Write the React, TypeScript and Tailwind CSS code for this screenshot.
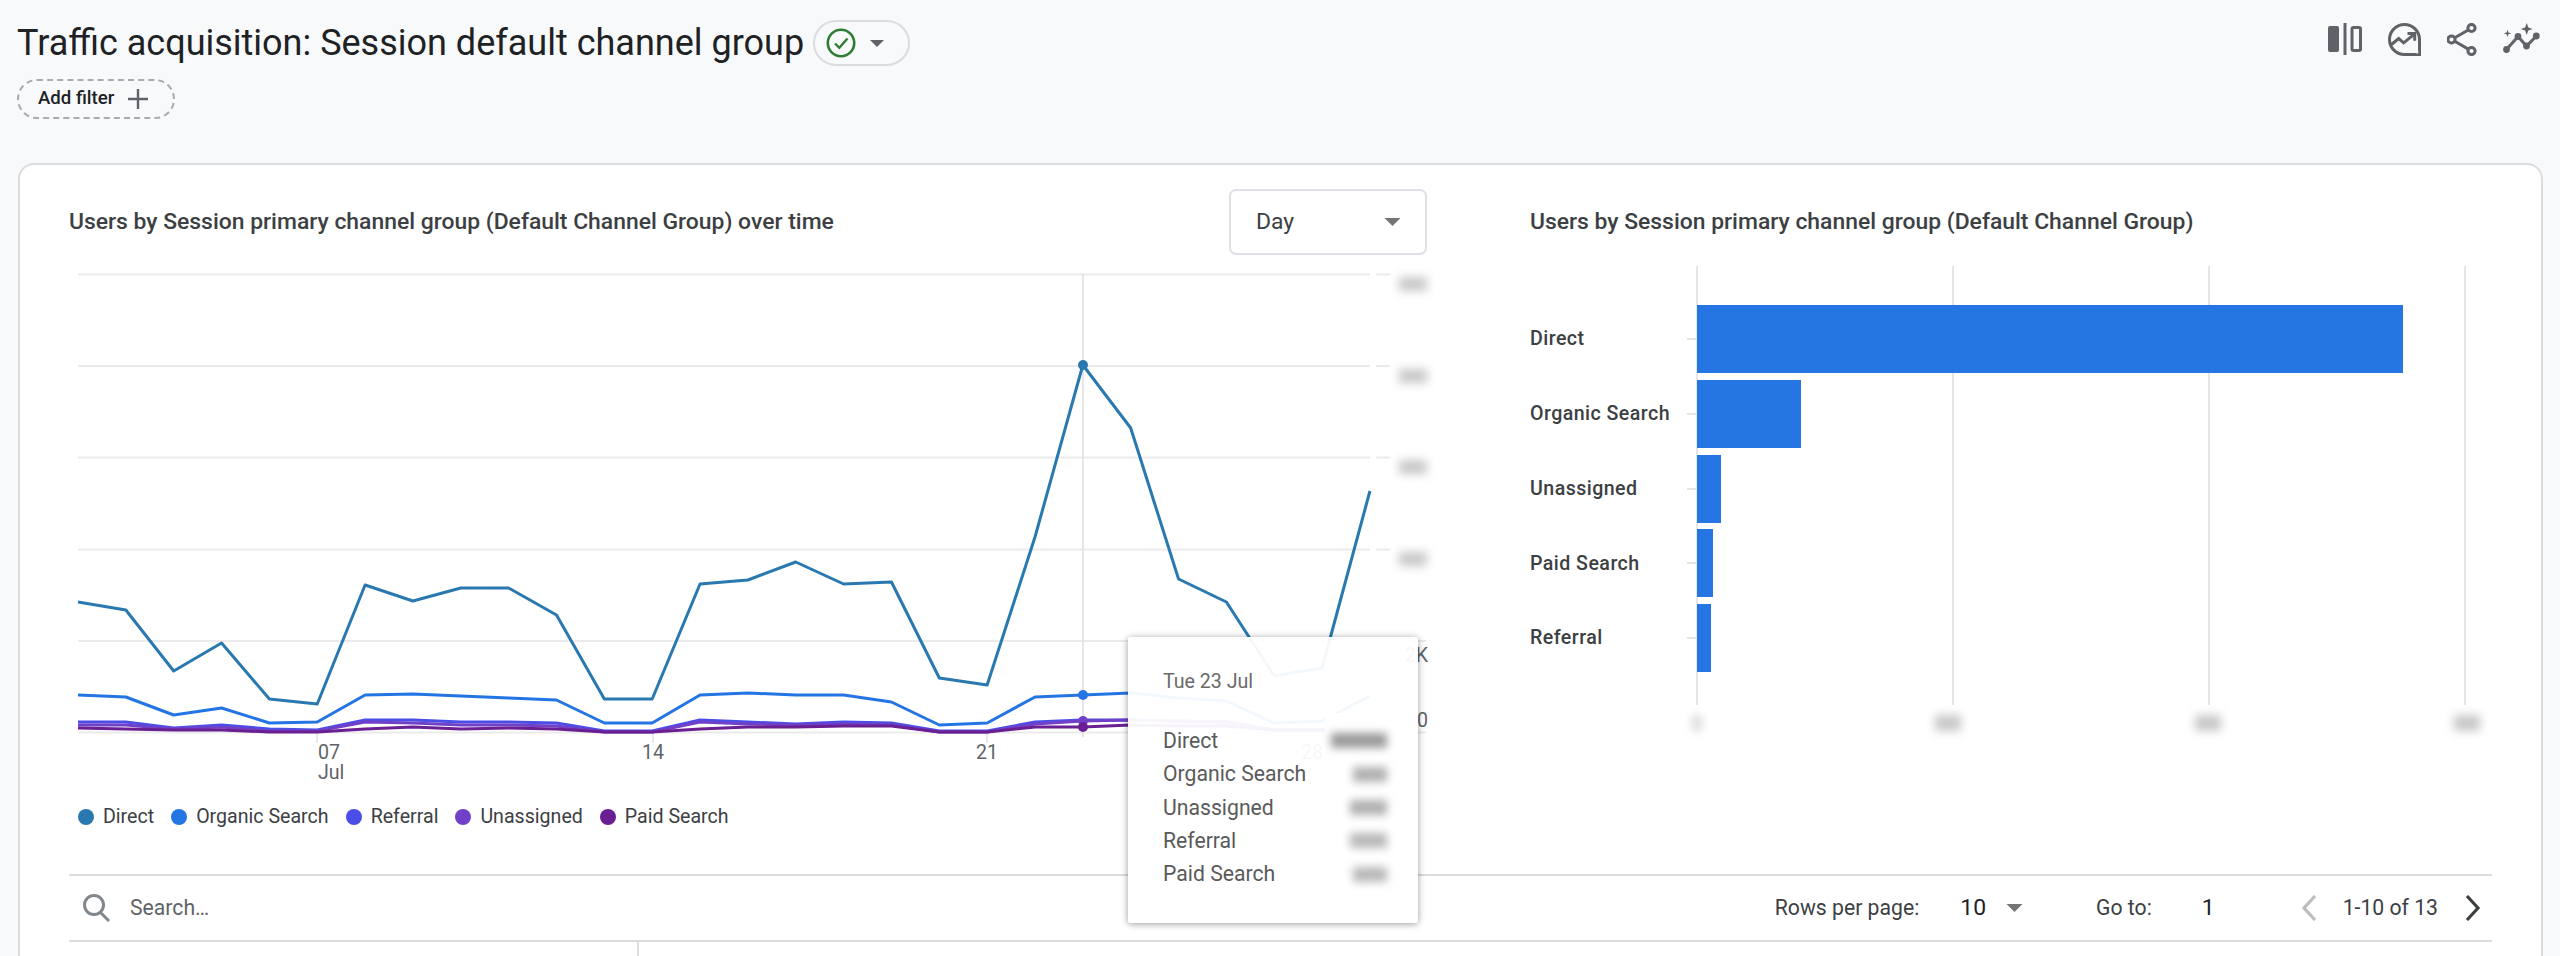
import React from 'react';

const xAt = (i: number) => 78 + i * 47.85;
const toPoints = (ys: number[]) => ys.map((y, i) => `${xAt(i)},${y}`).join(' ');

const series = [
  { name: 'Direct', stroke: '#2979b0', dot: 'bg-[#2979b0]', ys: [602, 610, 671, 643, 699, 704, 585, 601, 588, 588, 615, 699, 699, 584, 580, 562, 584, 582, 678, 685, 537, 365, 428, 579, 602, 676, 668, 491] },
  { name: 'Organic Search', stroke: '#2475e4', dot: 'bg-[#2475e4]', ys: [695, 697, 715, 708, 723, 722, 695, 694, 696, 698, 700, 723, 723, 695, 693, 695, 695, 702, 725, 723, 697, 695, 693, 698, 701, 723, 721, 696] },
  { name: 'Referral', stroke: '#4a4ee6', dot: 'bg-[#4a4ee6]', ys: [722, 722, 728, 725, 729, 730, 720, 720, 722, 722, 723, 731, 731, 720, 722, 724, 722, 723, 731, 731, 722, 720, 720, 721, 722, 730, 730, 727] },
  { name: 'Unassigned', stroke: '#7040c8', dot: 'bg-[#7040c8]', ys: [725, 725, 729, 727, 731, 731, 722, 723, 725, 725, 726, 732, 732, 722, 724, 725, 724, 725, 732, 732, 724, 721, 720, 721, 722, 730, 730, 727] },
  { name: 'Paid Search', stroke: '#6a1f93', dot: 'bg-[#6a1f93]', ys: [728, 729, 730, 730, 732, 732, 729, 727, 729, 728, 729, 732, 732, 729, 727, 727, 726, 726, 732, 732, 727, 727, 725, 726, 726, 730, 730, 728] },
];

const gridYs = [274.5, 366, 457.5, 549.5, 641, 732.5];

const tooltipRows = [
  { name: 'Direct', blob: 'w-[56px] bg-[#9a9a9a]' },
  { name: 'Organic Search', blob: 'w-[34px] bg-[#b0b0b0]' },
  { name: 'Unassigned', blob: 'w-[37px] bg-[#b0b0b0]' },
  { name: 'Referral', blob: 'w-[37px] bg-[#b8b8b8]' },
  { name: 'Paid Search', blob: 'w-[34px] bg-[#b8b8b8]' },
];

const bars = [
  { name: 'Direct', width: 'w-[706px]' },
  { name: 'Organic Search', width: 'w-[104px]' },
  { name: 'Unassigned', width: 'w-[24px]' },
  { name: 'Paid Search', width: 'w-[16px]' },
  { name: 'Referral', width: 'w-[14px]' },
];

function Caret({ className }: { className: string }) {
  return (
    <svg className={className} viewBox="0 0 16 8">
      <path d="M0 0h16L8 8z" fill="currentColor" />
    </svg>
  );
}

function HeaderIcons() {
  return (
    <div className="flex items-center gap-[26px] mr-[20px] mt-[2px] text-[#5f6368]">
      <svg className="w-[34px] h-[34px]" viewBox="0 0 34 34" fill="none" stroke="currentColor">
        <rect x="0" y="4" width="11" height="26" rx="2" fill="currentColor" stroke="none" />
        <path d="M17 1v32" strokeWidth="3" />
        <rect x="24" y="5.5" width="8.5" height="23" rx="1.5" strokeWidth="3" />
      </svg>
      <svg className="w-[33px] h-[33px]" viewBox="0 0 33 33" fill="none" stroke="currentColor">
        <path d="M16.5 1.5A15 15 0 0 1 31.5 16.5V31.5H16.5A15 15 0 1 1 16.5 1.5Z" strokeWidth="3" />
        <path d="M3.5 21.5l7.2-6 5 4.3 10-8.1" strokeWidth="3" />
        <path d="M19.5 10.5h7.2v7.2" strokeWidth="3" />
        <path d="M25 33h8v-8z" fill="currentColor" stroke="none" />
        <circle cx="29" cy="29" r="1.5" fill="#f8f9fb" stroke="none" />
      </svg>
      <svg className="w-[30px] h-[33px]" viewBox="0 0 30 33" fill="none" stroke="currentColor" strokeWidth="3">
        <circle cx="24.5" cy="5" r="3.6" />
        <circle cx="4.5" cy="16.5" r="3.6" />
        <circle cx="24.5" cy="28" r="3.6" />
        <path d="M7.7 14.7 21.3 7M7.7 18.3l13.6 7.8" />
      </svg>
      <svg className="w-[37px] h-[32px]" viewBox="0 0 37 32" fill="none" stroke="currentColor">
        <path d="M3.5 26.5 15 13.5l8.5 9.5 10-10" strokeWidth="3" />
        <circle cx="3.5" cy="26.5" r="3.4" fill="currentColor" stroke="none" />
        <circle cx="15" cy="13.5" r="3.4" fill="currentColor" stroke="none" />
        <circle cx="23.5" cy="23" r="3.4" fill="currentColor" stroke="none" />
        <circle cx="33.3" cy="13" r="3.4" fill="currentColor" stroke="none" />
        <path d="M23.7 0l1.6 4.4 4.4 1.6-4.4 1.6-1.6 4.4-1.6-4.4-4.4-1.6 4.4-1.6z" fill="currentColor" stroke="none" />
        <path d="M4.5 6.5l.9 2.9 2.9.9-2.9.9-.9 2.9-.9-2.9-2.9-.9 2.9-.9z" fill="currentColor" stroke="none" />
      </svg>
    </div>
  );
}

function LineChart() {
  return (
    <div className="relative h-[535px] w-[1380px]">
      <svg className="block w-[1380px] h-[535px]" viewBox="69 255 1380 535" fill="none">
        {gridYs.map((y, i) => (
          <g key={y} stroke="#ebebeb" strokeWidth="2">
            <path d={`M78 ${y}H1370`} />
            <path d={`M1376 ${y}H${i > 3 ? 1426 : 1390}`} />
          </g>
        ))}
        <path d="M1083 274V737" stroke="#e2e2e2" strokeWidth="1.6" />
        {[317, 653, 987, 1322].map((x) => (
          <path key={x} d={`M${x} 733V743`} stroke="#e4e4e4" strokeWidth="1.6" />
        ))}
        {series.map((s) => (
          <polyline key={s.name} points={toPoints(s.ys)} stroke={s.stroke} strokeWidth="3" strokeLinejoin="round" />
        ))}
        <circle cx="1083" cy="365" r="5" fill="#2979b0" />
        <circle cx="1083" cy="695" r="5" fill="#2475e4" />
        <circle cx="1083" cy="721" r="5" fill="#7040c8" />
        <circle cx="1083" cy="727" r="5" fill="#6a1f93" />
        <g fill="#5f6368" fontSize="19.6" fontFamily="Roboto, sans-serif">
          <text x="318" y="759">07</text>
          <text x="318" y="779">Jul</text>
          <text x="642" y="759">14</text>
          <text x="976" y="759">21</text>
          <text x="1301" y="759">28</text>
          <text x="1428" y="662" textAnchor="end">2K</text>
          <text x="1428" y="727" textAnchor="end">0</text>
        </g>
      </svg>

      <div className="absolute left-[1330px] top-[22px] flex flex-col gap-[77.5px]">
        {[0, 1, 2, 3].map((i) => (
          <div key={i} className="w-[28px] h-[14px] bg-[#c8c8c8] blur-[5px]" />
        ))}
      </div>

      <div className="absolute z-10 left-[1059px] top-[382px] w-[290px] h-[286px] rounded-[3px] bg-white/95 shadow-[0_1px_7px_rgba(0,0,0,0.4)] pl-[35px] pr-[31px] pt-[32px] text-[21.2px] text-[#5a5a5a]">
        <div className="leading-[26px] text-[19.6px] text-[#6a6a6a]">Tue 23 Jul</div>
        <div className="absolute left-[197px] top-[76px] w-[72px] h-[174px] bg-white" />
        <div className="relative flex flex-col mt-[29px]">
          {tooltipRows.map((r) => (
            <div key={r.name} className="flex items-center justify-between h-[33.4px]">
              <span>{r.name}</span>
              <span className={`h-[15px] blur-[4px] ${r.blob}`} />
            </div>
          ))}
        </div>
      </div>
    </div>
  );
}

function BarChart() {
  return (
    <div className="relative h-[439px] pt-[39px]">
      <div className="absolute left-[166px] top-0 h-[439px] w-[770px] flex justify-between">
        {[0, 1, 2, 3].map((i) => (
          <div key={i} className="w-[2px] h-full bg-[#e6e6e6]" />
        ))}
      </div>
      <div className="relative flex flex-col gap-[6.75px]">
        {bars.map((b) => (
          <div key={b.name} className="flex items-center h-[68px]">
            <span className="w-[157px] text-[19.6px] font-medium text-[#3c4043] tracking-[0.45px]">{b.name}</span>
            <span className="w-[10px] h-[2px] bg-[#e6e6e6]" />
            <span className={`h-full bg-[#2576e2] ${b.width}`} />
          </div>
        ))}
      </div>
      <div className="absolute left-[154px] top-[449px] w-[796px] flex justify-between">
        <div className="w-[10px] h-[16px] bg-[#dcdcdc] blur-[4px] ml-[8px]" />
        <div className="w-[26px] h-[16px] bg-[#c8c8c8] blur-[5px]" />
        <div className="w-[26px] h-[16px] bg-[#c8c8c8] blur-[5px]" />
        <div className="w-[26px] h-[16px] bg-[#c8c8c8] blur-[5px]" />
      </div>
    </div>
  );
}

export default function App() {
  return (
    <div className="w-[2560px] h-[956px] overflow-hidden bg-[#f8f9fb] flex flex-col font-[Roboto,sans-serif]">
      <header className="flex justify-between items-start pl-[17px] pt-[20px]">
        <div className="flex flex-col items-start">
          <div className="flex items-center h-[46px] gap-[9px]">
            <h1 className="text-[36px] leading-[46px] text-[#202124] font-normal">Traffic acquisition: Session default channel group</h1>
            <button className="flex items-center w-[97px] h-[46px] rounded-full border-2 border-[#dadce0] pl-[11px]">
              <svg className="w-[30px] h-[30px]" viewBox="0 0 30 30" fill="none" stroke="#2e7d32">
                <circle cx="15" cy="15" r="13.2" strokeWidth="2.6" />
                <path d="M9 15.5l4.3 4.3L21.5 10.5" strokeWidth="2.4" />
              </svg>
              <Caret className="w-[14px] h-[7px] ml-[14px] text-[#5f6368]" />
            </button>
          </div>
          <button className="mt-[13px] flex items-center w-[158px] h-[40px] rounded-full border-2 border-dashed border-[#a8acb0] pl-[19px] text-[18.6px] font-medium text-[#202124]">
            Add filter
            <svg className="w-[22px] h-[22px] ml-[13px]" viewBox="0 0 22 22" stroke="#5f6368" strokeWidth="2.4">
              <path d="M11 1v20M1 11h20" />
            </svg>
          </button>
        </div>
        <HeaderIcons />
      </header>

      <main className="mt-[44px] ml-[18px] mr-[17px] flex-1 rounded-t-[16px] border-2 border-b-0 border-[#dadce0] bg-white px-[49px]">
        <div className="flex h-[709px]">
          <section className="w-[1380px] flex flex-col">
            <div className="flex justify-between items-start pt-[24px] h-[90px] pr-[22px]">
              <h2 className="mt-[20px] text-[22.9px] leading-[26px] font-medium text-[#3c4043]">Users by Session primary channel group (Default Channel Group) over time</h2>
              <button className="flex items-center justify-between w-[198px] h-[66px] rounded-[7px] border-2 border-[#dfe0e6] pl-[25px] pr-[24px] text-[22.9px] text-[#3c4043]">
                Day
                <Caret className="w-[17px] h-[8px] text-[#757575]" />
              </button>
            </div>
            <LineChart />
            <div className="flex items-center h-[54px] pl-[9px] text-[19.6px] text-[#3c4043]">
              {series.map((s) => (
                <div key={s.name} className="flex items-center gap-[9px] mr-[17px]">
                  <span className={`w-[16px] h-[16px] rounded-full ${s.dot}`} />
                  {s.name}
                </div>
              ))}
            </div>
          </section>
          <section className="ml-[81px] flex-1">
            <h2 className="pt-[44px] h-[101px] text-[22.9px] leading-[26px] font-medium text-[#3c4043]">Users by Session primary channel group (Default Channel Group)</h2>
            <BarChart />
          </section>
        </div>

        <div className="flex items-center h-[66px] border-t-2 border-[#dadce0]">
          <svg className="ml-[13px] w-[28px] h-[28px]" viewBox="0 0 28 28" fill="none" stroke="#80868b" strokeWidth="3">
            <circle cx="12" cy="11" r="9.5" />
            <path d="M18.5 18.5 27 27" />
          </svg>
          <span className="ml-[20px] text-[21.2px] text-[#5f6368]">Search…</span>
          <div className="ml-auto flex items-center text-[21.2px] text-[#3c4043]">
            <span>Rows per page:</span>
            <span className="ml-[41px] text-[22.9px] text-[#202124]">10</span>
            <Caret className="w-[17px] h-[8px] ml-[20px] text-[#757575]" />
            <span className="ml-[73px]">Go to:</span>
            <span className="ml-[50px] text-[22.9px] text-[#202124]">1</span>
            <svg className="ml-[86px] w-[16px] h-[28px]" viewBox="0 0 16 28" fill="none" stroke="#bdbdbd" strokeWidth="3.2">
              <path d="M14 2 3 14l11 12" />
            </svg>
            <span className="ml-[26px]">1-10 of 13</span>
            <svg className="ml-[27px] w-[16px] h-[28px] mr-[11px]" viewBox="0 0 16 28" fill="none" stroke="#3c4043" strokeWidth="3.2">
              <path d="M2 2l11 12L2 26" />
            </svg>
          </div>
        </div>

        <div className="flex h-[20px] border-t-2 border-[#dadce0]">
          <div className="w-[570px] border-r-2 border-[#dadce0]" />
        </div>
      </main>
    </div>
  );
}
